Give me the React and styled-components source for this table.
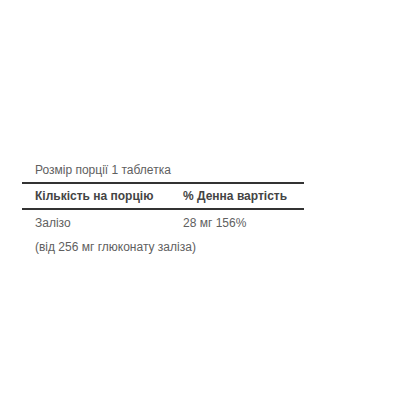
import React from 'react';
import styled, { createGlobalStyle } from 'styled-components';

const GlobalStyle = createGlobalStyle`
    body {
        margin: 0;
        background: #ffffff;
        font-family: 'Liberation Sans', Arial, sans-serif;
    }
`;

const Page = styled.div`
    width: 400px;
    height: 400px;
    padding: 158px 0 0 22px;
    box-sizing: border-box;
`;

const Facts = styled.div`
    width: 282px;
    color: #606060;
    font-size: 12px;
`;

const Serving = styled.div`
    padding: 0 13px;
    height: 24px;
    line-height: 24px;
    border-bottom: 2px solid #333333;
`;

const Row = styled.div`
    display: grid;
    grid-template-columns: ${(props) => (props.wide ? '1fr' : '148px 1fr')};
    padding: ${(props) => (props.head ? '0 13px' : '1px 13px 0')};
    height: ${(props) => props.height || 24}px;
    align-items: center;
    white-space: nowrap;
    border-bottom: ${(props) => (props.divider ? '2px solid #333333' : 'none')};
    font-weight: ${(props) => (props.head ? 700 : 400)};
    color: ${(props) => (props.head ? '#444444' : '#606060')};
`;

const App = () => {
    return (
        <Page>
            <GlobalStyle />
            <Facts>
                <Serving>Розмір порції 1 таблетка</Serving>
                <Row head divider>
                    <span>Кількість на порцію</span>
                    <span>% Денна вартість</span>
                </Row>
                <Row>
                    <span>Залізо</span>
                    <span>28 мг 156%</span>
                </Row>
                <Row wide height={22}>
                    <span>(від 256 мг глюконату заліза)</span>
                </Row>
            </Facts>
        </Page>
    );
};

export default App;
